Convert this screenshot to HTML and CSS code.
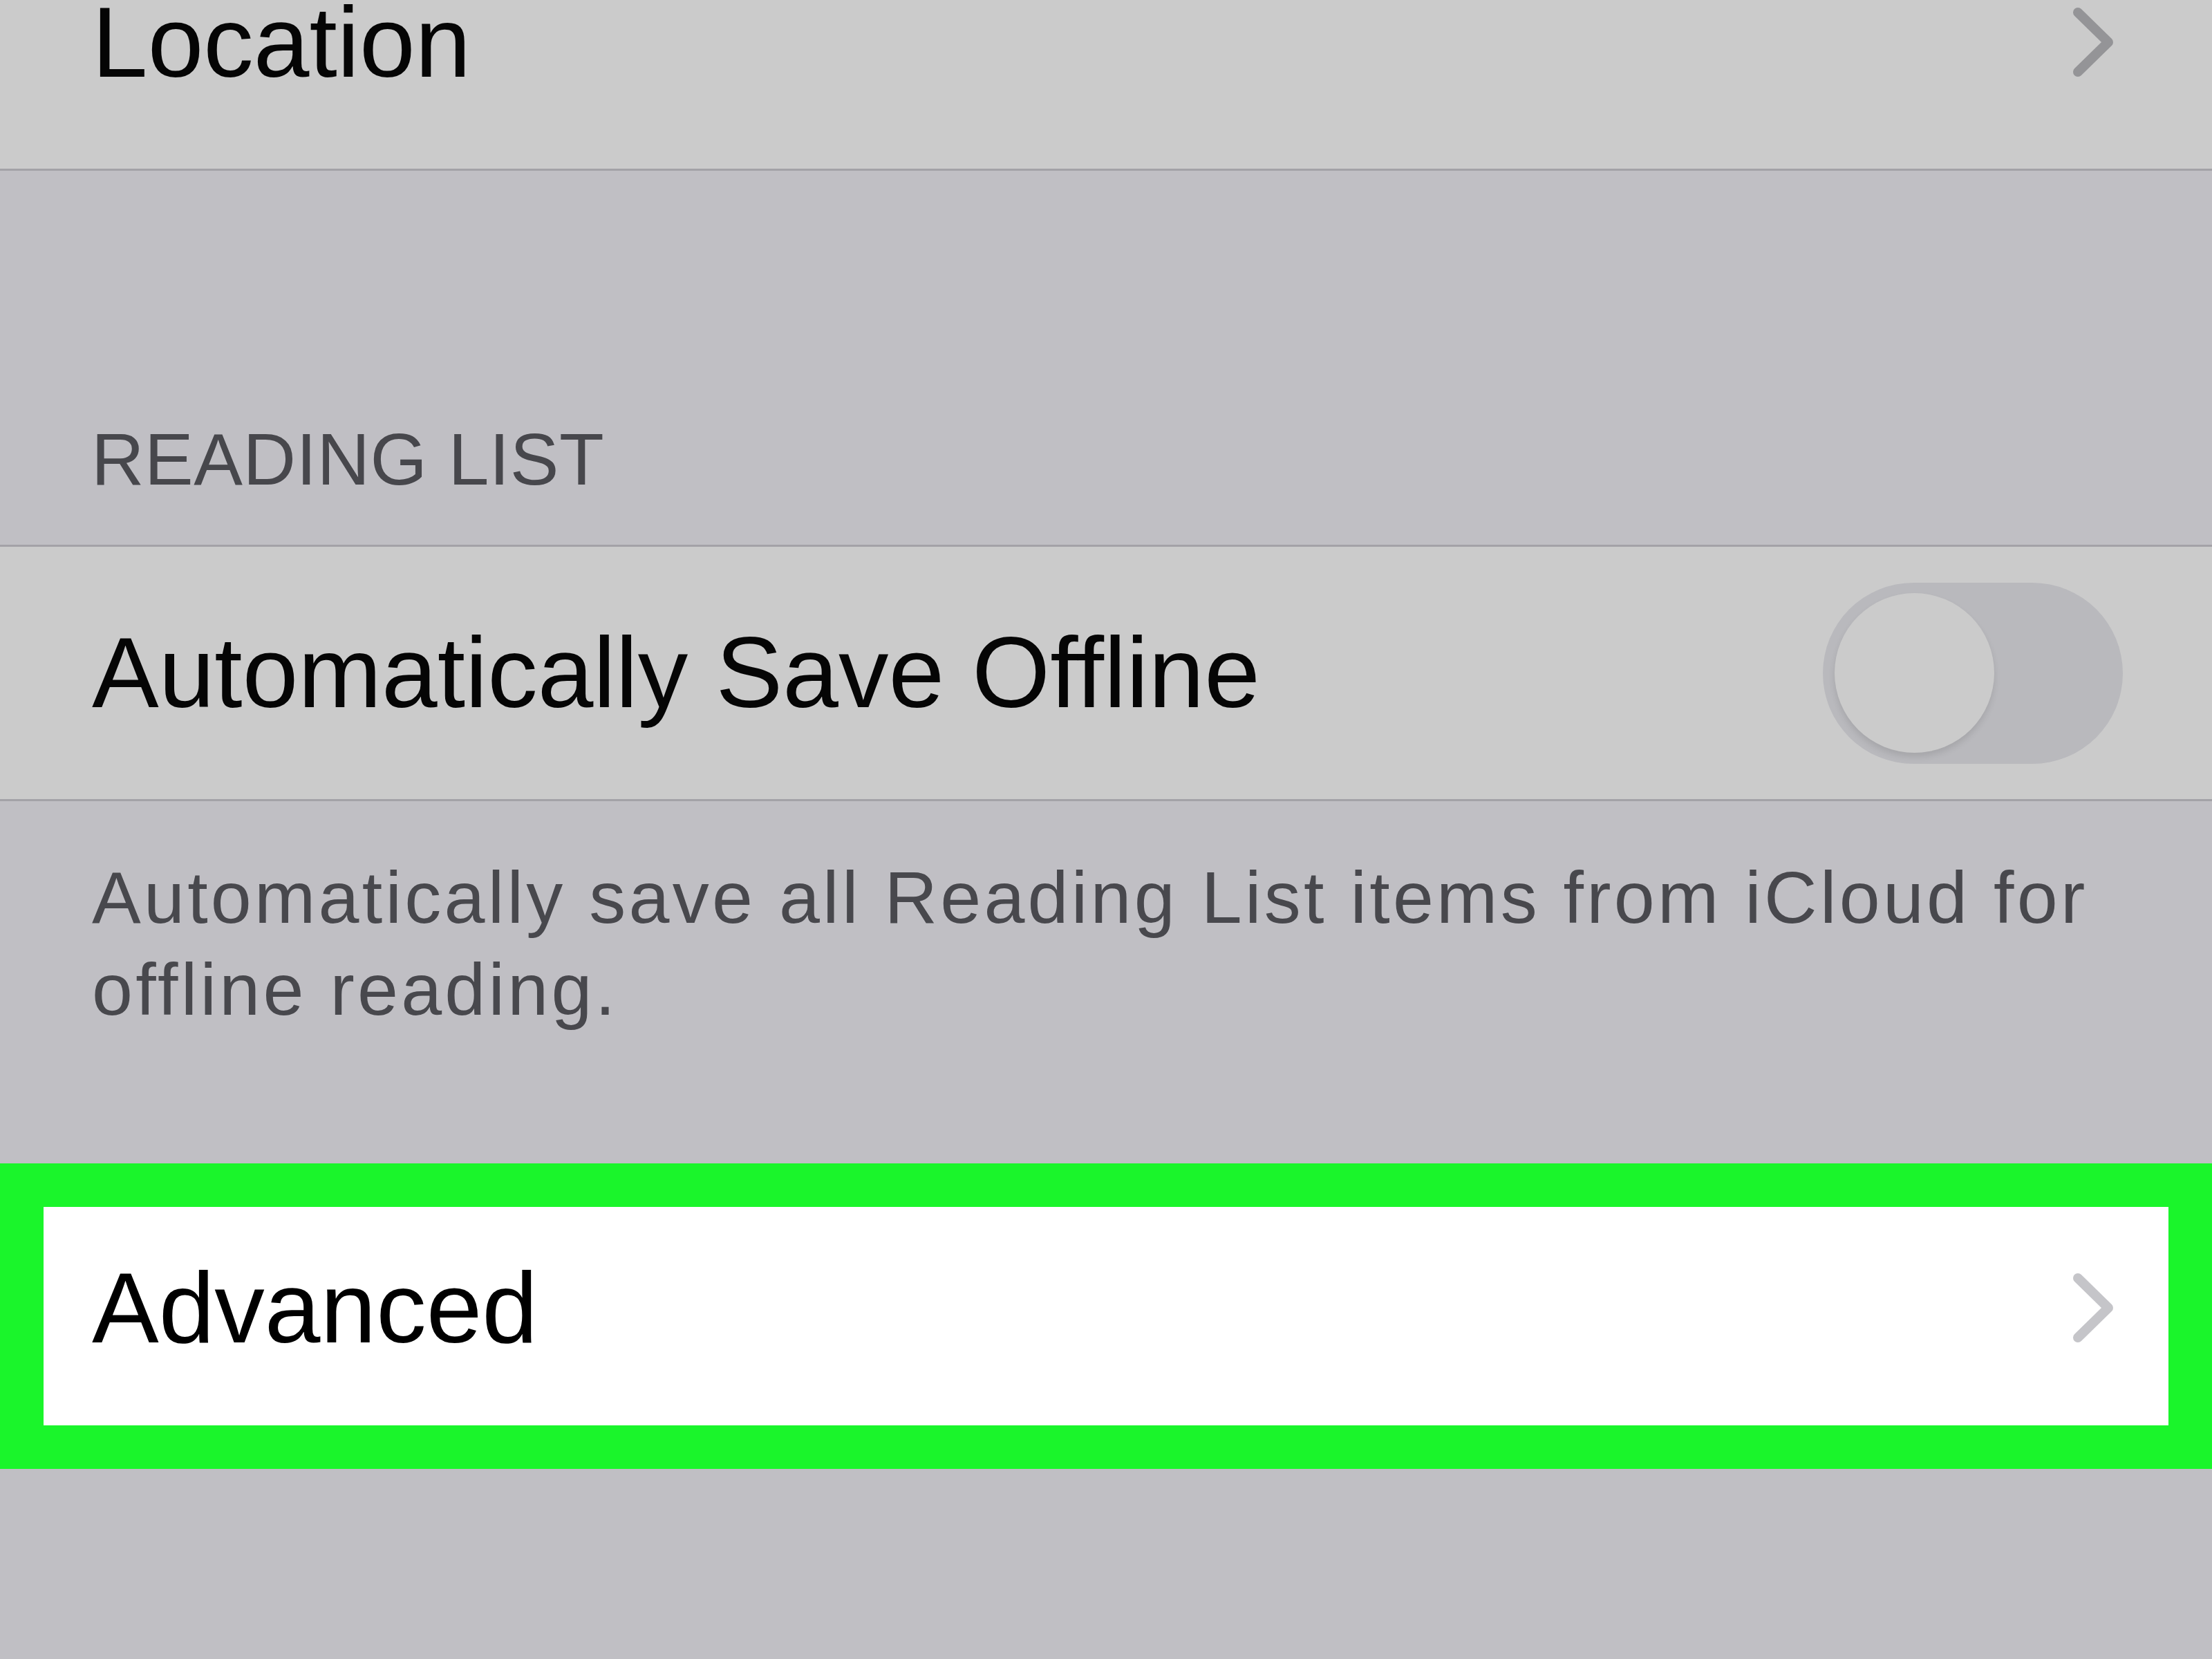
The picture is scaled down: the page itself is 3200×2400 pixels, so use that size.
FILE: index.html
```html
<!DOCTYPE html>
<html lang="en">
<head>
<meta charset="utf-8">
<title>Safari Settings</title>
<link rel="stylesheet" href="styles.css">
</head>
<body>
<div class="screen">
  <div class="cell cell-top">
    <span class="label">Location</span>
    <svg class="chevron dim" viewBox="0 0 60 102" width="60" height="102" aria-hidden="true">
      <polyline points="8,8 52,51 8,94" />
    </svg>
  </div>

  <div class="section-header">READING LIST</div>

  <div class="cell cell-toggle">
    <span class="label">Automatically Save Offline</span>
    <div class="toggle"><div class="knob"></div></div>
  </div>

  <div class="section-footer">Automatically save all Reading List items from iCloud for offline reading.</div>

  <div class="highlight">
    <div class="cell-advanced">
      <span class="label label-adv">Advanced</span>
      <svg class="chevron light" viewBox="0 0 60 102" width="60" height="102" aria-hidden="true">
        <polyline points="8,8 52,51 8,94" />
      </svg>
    </div>
  </div>
</div>
</body>
</html>
```

FILE: styles.css
```css
html, body {
  margin: 0;
  padding: 0;
}
body {
  background: #c0bfc4;
  width: 3200px;
  height: 2400px;
  overflow: hidden;
  font-family: "Liberation Sans", Arial, sans-serif;
}
.screen {
  width: 3200px;
  display: flex;
  flex-direction: column;
}
.cell {
  box-sizing: border-box;
  background: #cbcbcb;
  display: flex;
  align-items: center;
  justify-content: space-between;
}
.label {
  font-size: 145px;
  line-height: 1;
  color: #050505;
  white-space: nowrap;
}
.cell-top {
  height: 369px;
  margin-top: -122px;
  border-bottom: 3px solid #a3a2a7;
  padding: 0 142px 0 133px;
}
.chevron polyline {
  fill: none;
  stroke-width: 14;
  stroke-linecap: round;
  stroke-linejoin: round;
}
.chevron.dim polyline { stroke: #949497; }
.chevron.light polyline { stroke: #c5c5c9; }

.section-header {
  padding: 364px 0 71px 132px;
  font-size: 106px;
  line-height: 1;
  color: #47474c;
  letter-spacing: 0.5px;
}
.cell-toggle {
  height: 371px;
  border-top: 3px solid #a3a2a7;
  border-bottom: 3px solid #a3a2a7;
  padding: 0 129px 0 133px;
}
.toggle {
  box-sizing: border-box;
  width: 434px;
  height: 262px;
  border-radius: 131px;
  background: #b9b9bd;
  padding: 16px 17px;
  display: flex;
  align-items: center;
}
.knob {
  width: 231px;
  height: 231px;
  border-radius: 50%;
  background: #cbcbcb;
  box-shadow: 0 6px 10px rgba(0, 0, 0, 0.10);
}
.section-footer {
  padding: 73px 120px 185px 133px;
  font-size: 106px;
  line-height: 133px;
  letter-spacing: 4.25px;
  color: #48484d;
}
.highlight {
  border: 63px solid #1af52b;
  background: #ffffff;
}
.cell-advanced {
  box-sizing: border-box;
  height: 316px;
  padding: 0 79px 24px 70px;
  display: flex;
  align-items: center;
  justify-content: space-between;
  background: #ffffff;
}
.label-adv {
  color: #000000;
}
```
